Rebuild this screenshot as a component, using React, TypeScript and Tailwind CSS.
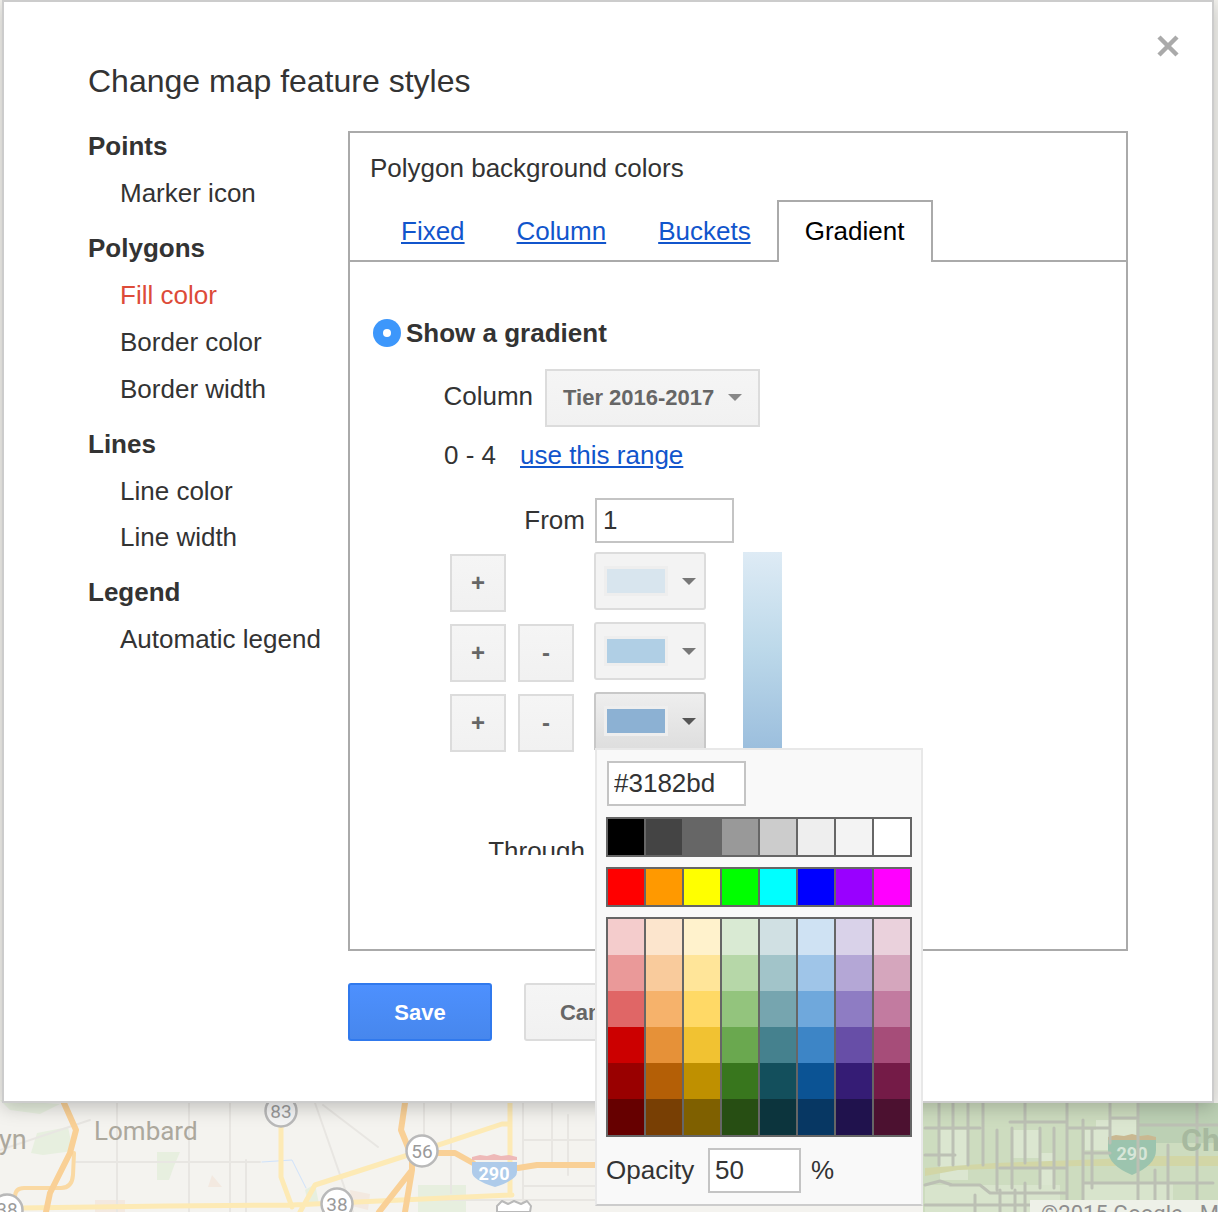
const greys = ["#000000", "#444444", "#666666", "#999999", "#cccccc", "#eeeeee", "#f3f3f3", "#ffffff"];
const brights = ["#ff0000", "#ff9900", "#ffff00", "#00ff00", "#00ffff", "#0000ff", "#9900ff", "#ff00ff"];
const shades = [
  ["#f4cccc", "#ea9999", "#e06666", "#cc0000", "#990000", "#660000"],
  ["#fce5cd", "#f9cb9c", "#f6b26b", "#e69138", "#b45f06", "#783f04"],
  ["#fff2cc", "#ffe599", "#ffd966", "#f1c232", "#bf9000", "#7f6000"],
  ["#d9ead3", "#b6d7a8", "#93c47d", "#6aa84f", "#38761d", "#274e13"],
  ["#d0e0e3", "#a2c4c9", "#76a5af", "#45818e", "#134f5c", "#0c343d"],
  ["#cfe2f3", "#9fc5e8", "#6fa8dc", "#3d85c6", "#0b5394", "#073763"],
  ["#d9d2e9", "#b4a7d6", "#8e7cc3", "#674ea7", "#351c75", "#20124d"],
  ["#ead1dc", "#d5a6bd", "#c27ba0", "#a64d79", "#741b47", "#4c1130"],
];

const sections = [
  { title: "Points", items: ["Marker icon"] },
  { title: "Polygons", items: ["Fill color", "Border color", "Border width"] },
  { title: "Lines", items: ["Line color", "Line width"] },
  { title: "Legend", items: ["Automatic legend"] },
];

const steps = [
  { swatch: "#d8e5ee", removable: false, open: false },
  { swatch: "#b0cfe5", removable: true, open: false },
  { swatch: "#8cb1d3", removable: true, open: true },
];

function Caret({ className }: { className: string }) {
  return (
    <svg width="14" height="7" viewBox="0 0 14 7" className={className}>
      <path d="M0 0h14L7 7z" fill="currentColor" />
    </svg>
  );
}

function SmallButton({ label }: { label: string }) {
  return (
    <button
      type="button"
      className="mt-[2px] flex h-[58px] w-[56px] items-center justify-center border-2 border-[#dcdcdc] bg-gradient-to-b from-[#f5f5f5] to-[#f1f1f1] text-[24px] font-bold text-[#666]"
    >
      {label}
    </button>
  );
}

function ColorRow({ colors }: { colors: string[] }) {
  return (
    <div className="grid w-[306px] grid-cols-8 gap-x-[2px] border-2 border-[#666] bg-[#666]">
      {colors.map((c) => (
        <div key={c} className="h-[36px]" style={{ background: c }} />
      ))}
    </div>
  );
}

function ColorPopup() {
  return (
    <div className="absolute left-[591px] top-[746px] h-[458px] w-[328px] border-2 border-[#e8e8e8] border-b-[#cccccc] bg-[#f9f9f9] pl-[9px] pt-[11px]">
      <input
        readOnly
        value="#3182bd"
        className="ml-[1px] block h-[45px] w-[139px] border-2 border-[#c4c4c4] bg-white px-[5px] text-[26px] text-[#333] outline-none"
      />
      <div className="mt-[11px]">
        <ColorRow colors={greys} />
      </div>
      <div className="mt-[10px]">
        <ColorRow colors={brights} />
      </div>
      <div className="mt-[10px] grid w-[306px] grid-cols-8 gap-x-[2px] border-2 border-[#666] bg-[#666]">
        {shades.map((col) => (
          <div key={col[0]}>
            {col.map((c) => (
              <div key={c} className="h-[36px]" style={{ background: c }} />
            ))}
          </div>
        ))}
      </div>
      <div className="mt-[11px] flex items-center text-[26px] text-[#333]">
        <span className="w-[102px]">Opacity</span>
        <input
          readOnly
          value="50"
          className="h-[45px] w-[93px] border-2 border-[#c4c4c4] bg-white px-[5px] text-[26px] text-[#333] outline-none"
        />
        <span className="ml-[10px]">%</span>
      </div>
    </div>
  );
}

function GradientTab() {
  return (
    <div className="h-[593px] overflow-hidden pt-[57px] text-[26px] text-[#333]">
      <div className="flex h-[28px] items-center pl-[23px]">
        <span className="flex h-[28px] w-[28px] items-center justify-center rounded-full bg-[#3d97fb]">
          <span className="h-[8px] w-[8px] rounded-full bg-white" />
        </span>
        <span className="ml-[5px] font-bold">Show a gradient</span>
      </div>

      <div className="mt-[22px] flex items-center">
        <span className="mb-[4px] w-[183px] text-right">Column</span>
        <button
          type="button"
          className="ml-[12px] flex h-[58px] w-[215px] items-center border-2 border-[#dcdcdc] bg-gradient-to-b from-[#f5f5f5] to-[#f1f1f1] pb-[2px] pl-[16px] text-[22px] font-bold text-[#666]"
        >
          Tier 2016-2017
          <Caret className="ml-[14px] text-[#888]" />
        </button>
      </div>

      <div className="mt-[13px] flex h-[30px] items-center pl-[94px]">
        <span className="w-[76px]">0 - 4</span>
        <a href="#" className="text-[#1155cc] underline">
          use this range
        </a>
      </div>

      <div className="mt-[28px] flex items-center">
        <span className="w-[235px] text-right">From</span>
        <input
          readOnly
          value="1"
          className="ml-[10px] h-[45px] w-[139px] border-2 border-[#c4c4c4] px-[6px] text-[26px] text-[#333] outline-none"
        />
      </div>

      <div className="mt-[9px] flex pl-[100px]">
        <div className="flex w-[256px] flex-col">
          <div className="flex flex-col gap-[10px]">
            {steps.map((step, i) => (
              <div key={i} className="flex">
                <SmallButton label="+" />
                <div className="ml-[12px] w-[56px]">
                  {step.removable && <SmallButton label="-" />}
                </div>
                <button
                  type="button"
                  className={
                    step.open
                      ? "ml-[20px] flex h-[58px] w-[112px] items-center rounded-t-[3px] border-2 border-[#c8c8c8] bg-gradient-to-b from-[#eeeeee] to-[#dedede] pl-[8px]"
                      : "ml-[20px] flex h-[58px] w-[112px] items-center rounded-[3px] border-2 border-[#dcdcdc] bg-[#f3f3f3] pl-[8px]"
                  }
                >
                  <span
                    className="h-[30px] w-[64px] border-[3px] border-[#eeeeee]"
                    style={{ background: step.swatch }}
                  />
                  <Caret className={step.open ? "ml-[14px] text-[#555]" : "ml-[14px] text-[#777]"} />
                </button>
              </div>
            ))}
          </div>
          <div className="mt-[80px] w-[135px] text-right">Through</div>
        </div>
        <div className="ml-[37px] w-[39px] bg-[linear-gradient(to_bottom,#deebf5,#bdd9ea_30%,#9bbedd_62%)]" />
      </div>
    </div>
  );
}

function MapBackdrop() {
  return (
    <svg
      className="absolute inset-0"
      width="1218"
      height="1212"
      viewBox="0 0 1218 1212"
      fill="none"
      strokeLinecap="round"
      strokeLinejoin="round"
    >
      <rect width="1218" height="1212" fill="#f4f3ef" />
      {/* base map, left part */}
      <path d="M31 1153l6-20 31-6 5 24-30 4zM157 1152h23l-6 14-5 14h-12zM0 1100l60 4-20 10-30-4z" fill="#e7efdf" />
      <path d="M418 1185h48v27h-48zM305 1190l10-6 4 20-10 2z" fill="#e7efdf" />
      <path d="M350 1190l20 4-2 16-16-4zM95 1200h30v12H95zM212 1175l10 12h-14z" fill="#f3e9e0" />
      <path
        d="M117 1103v109M189 1103v109M230 1103v109M246 1160v52M315 1103l38 109M323 1105l55 42M424 1103v50M451 1103v90M523 1103v109M552 1103v60M568 1115v60M0 1150l90-30M76 1162h184M430 1200h165M523 1140h72M523 1186h72"
        stroke="#e8e6e2"
        strokeWidth="2"
      />
      <path d="M262 1162l30-2 14 28" stroke="#cfe2fb" strokeWidth="1" />
      <path d="M20 1208l147-2 125-1 220-10M281 1123v54l11 30M300 1212l15-27 90-29 97-32h8M510 1103v92" stroke="#fdeab5" strokeWidth="5" />
      <path d="M74 1153l-1 22q-1 13-12 13H24q-9 0-9 9v10" stroke="#fad9a3" strokeWidth="4" />
      <path d="M64 1103l12 27-6 23-20 40-4 19M405 1103l-4 27 11 27v13l-33 42M412 1170l-7 42M428 1153h27l18 10M518 1168l19-3h58" stroke="#f9d096" strokeWidth="6" />
      <circle cx="281" cy="1111" r="15.5" fill="#f5f5f5" stroke="#b9b9b9" strokeWidth="2.5" />
      <circle cx="422" cy="1151" r="15.5" fill="#fff" stroke="#b9b9b9" strokeWidth="2.5" />
      <circle cx="337" cy="1204" r="15.5" fill="#fff" stroke="#b9b9b9" strokeWidth="2.5" />
      <circle cx="7" cy="1210" r="15.5" fill="#fff" stroke="#b9b9b9" strokeWidth="2.5" />
      <path d="M497 1212v-6l5-5 6 3 6-3 7 3 6-3 4 5-1 6z" fill="#fff" stroke="#b9b9b9" strokeWidth="2" />
      <path d="M472 1157l8-2 7 1 7-2 7 2 8-1 8 2v3h-45z" fill="#eeb9b8" />
      <path d="M472 1162h45v10q0 8-22 15-23-7-23-15z" fill="#aecbea" />
      <g fontFamily="Roboto, sans-serif" textAnchor="middle" fontSize="19" fill="#9a9a9a">
        <text x="281" y="1118">83</text>
        <text x="422" y="1158">56</text>
        <text x="337" y="1211">38</text>
        <text x="7" y="1216">38</text>
      </g>
      <text x="494" y="1180" fontFamily="Roboto, sans-serif" fontWeight="700" fontSize="18" textAnchor="middle" fill="#fff">290</text>
      <text x="94" y="1140" fontFamily="Roboto, sans-serif" fontSize="26" fill="#aca89d">Lombard</text>
      <text x="-1" y="1149" fontFamily="Roboto, sans-serif" fontSize="27" fill="#aca89d">yn</text>

      {/* shaded polygons, right part */}
      <rect x="923" y="1103" width="295" height="109" fill="#cddcbf" />
      <path d="M1096 1120h40v26h-40zM940 1130h28v50h-28zM1012 1130h28v28h-28zM1040 1153h15v50h-15zM1085 1130h25v20h-25z" fill="#dbe6d0" />
      <path d="M925 1185h135v27H925zM1083 1184h90v28h-90z" fill="#d8e4cc" />
      <path d="M1138 1103h80v40h-80z" fill="#bcd0b4" />
      <path d="M925 1168l70-5 110-4 30-3h83v10h-140l-120 4-33 6z" fill="#d2d6a6" />
      <path d="M1108 1140h48v10q0 15-24 25-24-10-24-25z" fill="#9cc4ae" />
      <path d="M1108 1137l8-2 8 1 8-2 8 2 8-1 8 2v3h-48z" fill="#c9b891" />
      <text x="1132" y="1160" fontFamily="Roboto, sans-serif" fontWeight="700" fontSize="18" textAnchor="middle" fill="#d7e6d8">290</text>
      <path
        d="M939 1103v62M953 1103v62M968 1103v62M983 1103v62M997 1130v60M1012 1128v60M1025 1103v60M1040 1128v60M1054 1128v60M1067 1103v100M1083 1120v92M1092 1128v60M1110 1103v40M1138 1103v102M1155 1170v32M1168 1145v60M1197 1103v109M925 1128h55M1010 1122h57M1110 1118h28M1138 1125h80M1067 1128h43M925 1155h30M950 1185h30l10 8h75M1083 1183h90l40 0M925 1185l15-4 12 4M925 1205h150M1000 1168h65M1083 1153h27M1067 1205l8 7M1025 1183v29M1000 1190v22M975 1195v17M1015 1190v22"
        stroke="#bcc0b4"
        strokeWidth="3"
      />
      <text x="1181" y="1151" fontFamily="Roboto, sans-serif" fontWeight="700" fontSize="32" fill="#a7b99f">Ch</text>

      <rect x="1030" y="1200" width="188" height="12" fill="#eef1e8" />
      <text x="1041" y="1221" fontFamily="Roboto, sans-serif" fontSize="22" fill="#8e8e8e">©2015 Google - Map</text>
    </svg>
  );
}

export default function App() {
  return (
    <div className="relative h-[1212px] w-[1218px] overflow-hidden font-['Liberation_Sans',Arial,sans-serif]">
      <MapBackdrop />
      <div className="relative ml-[2px] h-[1103px] w-[1212px] border-2 border-[#cccccc] bg-white shadow-[0_4px_18px_rgba(0,0,0,0.22)]">
        <svg
          className="absolute right-[32px] top-[32px]"
          width="24"
          height="24"
          viewBox="0 0 24 24"
          fill="none"
        >
          <path d="M3 3l18 18M21 3L3 21" stroke="#aaaaaa" strokeWidth="4.5" />
        </svg>

        <h1 className="pl-[84px] pt-[60px] text-[32px] leading-[38px] text-[#333]">
          Change map feature styles
        </h1>

        <div className="mt-[31px] flex pl-[84px]">
          <nav className="flex w-[260px] flex-col gap-[25px] text-[26px] leading-[30px] text-[#333]">
            {sections.map((section) => (
              <div key={section.title}>
                <div className="font-bold">{section.title}</div>
                <ul
                  className={
                    section.items.length === 2
                      ? "mt-[17px] flex flex-col gap-[16px] pl-[32px]"
                      : "mt-[17px] flex flex-col gap-[17px] pl-[32px]"
                  }
                >
                  {section.items.map((item) => (
                    <li key={item} className={item === "Fill color" ? "text-[#dd4b39]" : ""}>
                      {item}
                    </li>
                  ))}
                </ul>
              </div>
            ))}
          </nav>

          <div>
            <div className="h-[820px] w-[780px] border-2 border-[#aaaaaa]">
              <div className="pl-[20px] pt-[20px] text-[26px] leading-[30px] text-[#333]">
                Polygon background colors
              </div>
              <div className="mt-[17px] flex h-[62px] border-b-2 border-[#aaaaaa] pl-[25px] text-[26px]">
                {["Fixed", "Column", "Buckets"].map((tab) => (
                  <a key={tab} href="#" className="flex h-[60px] items-center px-[26px] pt-[2px] text-[#1155cc] underline">
                    {tab}
                  </a>
                ))}
                <div className="flex h-[62px] items-center border-2 border-b-0 border-[#aaaaaa] bg-white pb-[2px] pl-[26px] pr-[27px] text-black">
                  Gradient
                </div>
              </div>
              <GradientTab />
            </div>

            <div className="mt-[32px] flex gap-[32px]">
              <button
                type="button"
                className="h-[58px] w-[144px] rounded-[3px] border-2 border-[#3079ed] bg-gradient-to-b from-[#4d90fe] to-[#4787ed] text-[22px] font-bold text-white"
              >
                Save
              </button>
              <button
                type="button"
                className="h-[58px] w-[144px] rounded-[3px] border-2 border-[#dcdcdc] bg-gradient-to-b from-[#f5f5f5] to-[#f1f1f1] text-[22px] font-bold text-[#666]"
              >
                Cancel
              </button>
            </div>
          </div>
        </div>

        <ColorPopup />
      </div>
    </div>
  );
}
